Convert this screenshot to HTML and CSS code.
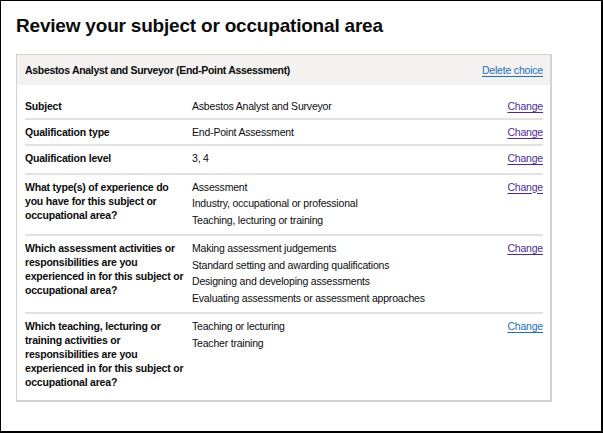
FILE: index.html
```html
<!DOCTYPE html>
<html lang="en">
<head>
<meta charset="utf-8">
<title>Review your subject or occupational area</title>
<link rel="stylesheet" href="styles.css">
</head>
<body>
<div class="frame">
  <h1 class="heading">Review your subject or occupational area</h1>
  <div class="card">
    <div class="card-header">
      <h2 class="card-title">Asbestos Analyst and Surveyor (End-Point Assessment)</h2>
      <a class="link" href="#">Delete choice</a>
    </div>
    <dl class="summary">
      <div class="row">
        <dt class="key">Subject</dt>
        <dd class="value">Asbestos Analyst and Surveyor</dd>
        <dd class="actions"><a class="link visited" href="#">Change</a></dd>
      </div>
      <div class="row">
        <dt class="key">Qualification type</dt>
        <dd class="value">End-Point Assessment</dd>
        <dd class="actions"><a class="link visited" href="#">Change</a></dd>
      </div>
      <div class="row">
        <dt class="key">Qualification level</dt>
        <dd class="value"><p class="item">3, 4</p></dd>
        <dd class="actions"><a class="link visited" href="#">Change</a></dd>
      </div>
      <div class="row">
        <dt class="key">What type(s) of experience do you have for this subject or occupational area?</dt>
        <dd class="value">
          <p class="item">Assessment</p>
          <p class="item">Industry, occupational or professional</p>
          <p class="item">Teaching, lecturing or training</p>
        </dd>
        <dd class="actions"><a class="link visited" href="#">Change</a></dd>
      </div>
      <div class="row">
        <dt class="key">Which assessment activities or responsibilities are you experienced in for this subject or occupational area?</dt>
        <dd class="value">
          <p class="item">Making assessment judgements</p>
          <p class="item">Standard setting and awarding qualifications</p>
          <p class="item">Designing and developing assessments</p>
          <p class="item">Evaluating assessments or assessment approaches</p>
        </dd>
        <dd class="actions"><a class="link visited" href="#">Change</a></dd>
      </div>
      <div class="row">
        <dt class="key">Which teaching, lecturing or training activities or responsibilities are you experienced in for this subject or occupational area?</dt>
        <dd class="value">
          <p class="item">Teaching or lecturing</p>
          <p class="item">Teacher training</p>
        </dd>
        <dd class="actions"><a class="link" href="#">Change</a></dd>
      </div>
    </dl>
  </div>
</div>
</body>
</html>
```
FILE: styles.css
```css
html, body {
  margin: 0;
  padding: 0;
  background: #ffffff;
}

body {
  font-family: "Liberation Sans", Arial, sans-serif;
  color: #0b0c0c;
}

.frame {
  box-sizing: border-box;
  width: 603px;
  height: 433px;
  border-style: solid;
  border-color: #000000;
  border-width: 1px 2px 2px 1px;
  padding: 14px 49px 0 15px;
}

.heading {
  margin: 0 0 17px;
  font-size: 19px;
  line-height: 22px;
  letter-spacing: -0.2px;
  font-weight: 700;
}

.card {
  border: 1px solid #d2d2d2;
  border-width: 1px 2px 2px 1px;
}

.card-header {
  display: flex;
  justify-content: space-between;
  align-items: center;
  background: #f3f2f1;
  padding: 8px 7px 8px 8px;
}

.card-title {
  margin: 0;
  font-size: 10.5px;
  line-height: 14px;
  letter-spacing: -0.32px;
  font-weight: 700;
}

.link {
  font-size: 10.5px;
  line-height: 14px;
  letter-spacing: -0.2px;
  color: #1d70b8;
  text-decoration: underline;
  text-underline-offset: 2px;
  text-decoration-thickness: 1px;
}

.link.visited {
  color: #4c2c92;
}

.summary {
  margin: 0;
  padding: 9px 7px 6px 8px;
}

.row {
  display: grid;
  grid-template-columns: 167px 1fr auto;
  padding: 5px 0;
  border-bottom: 2px solid #e2e2e2;
  font-size: 10.5px;
  line-height: 14px;
  letter-spacing: -0.2px;
}

.row:last-child {
  border-bottom: none;
}

.key {
  margin: 0;
  padding-right: 5px;
  font-weight: 700;
}

.value {
  margin: 0;
}

.item {
  margin: 0 0 2.5px;
}

.actions {
  margin: 0;
  text-align: right;
}
```
